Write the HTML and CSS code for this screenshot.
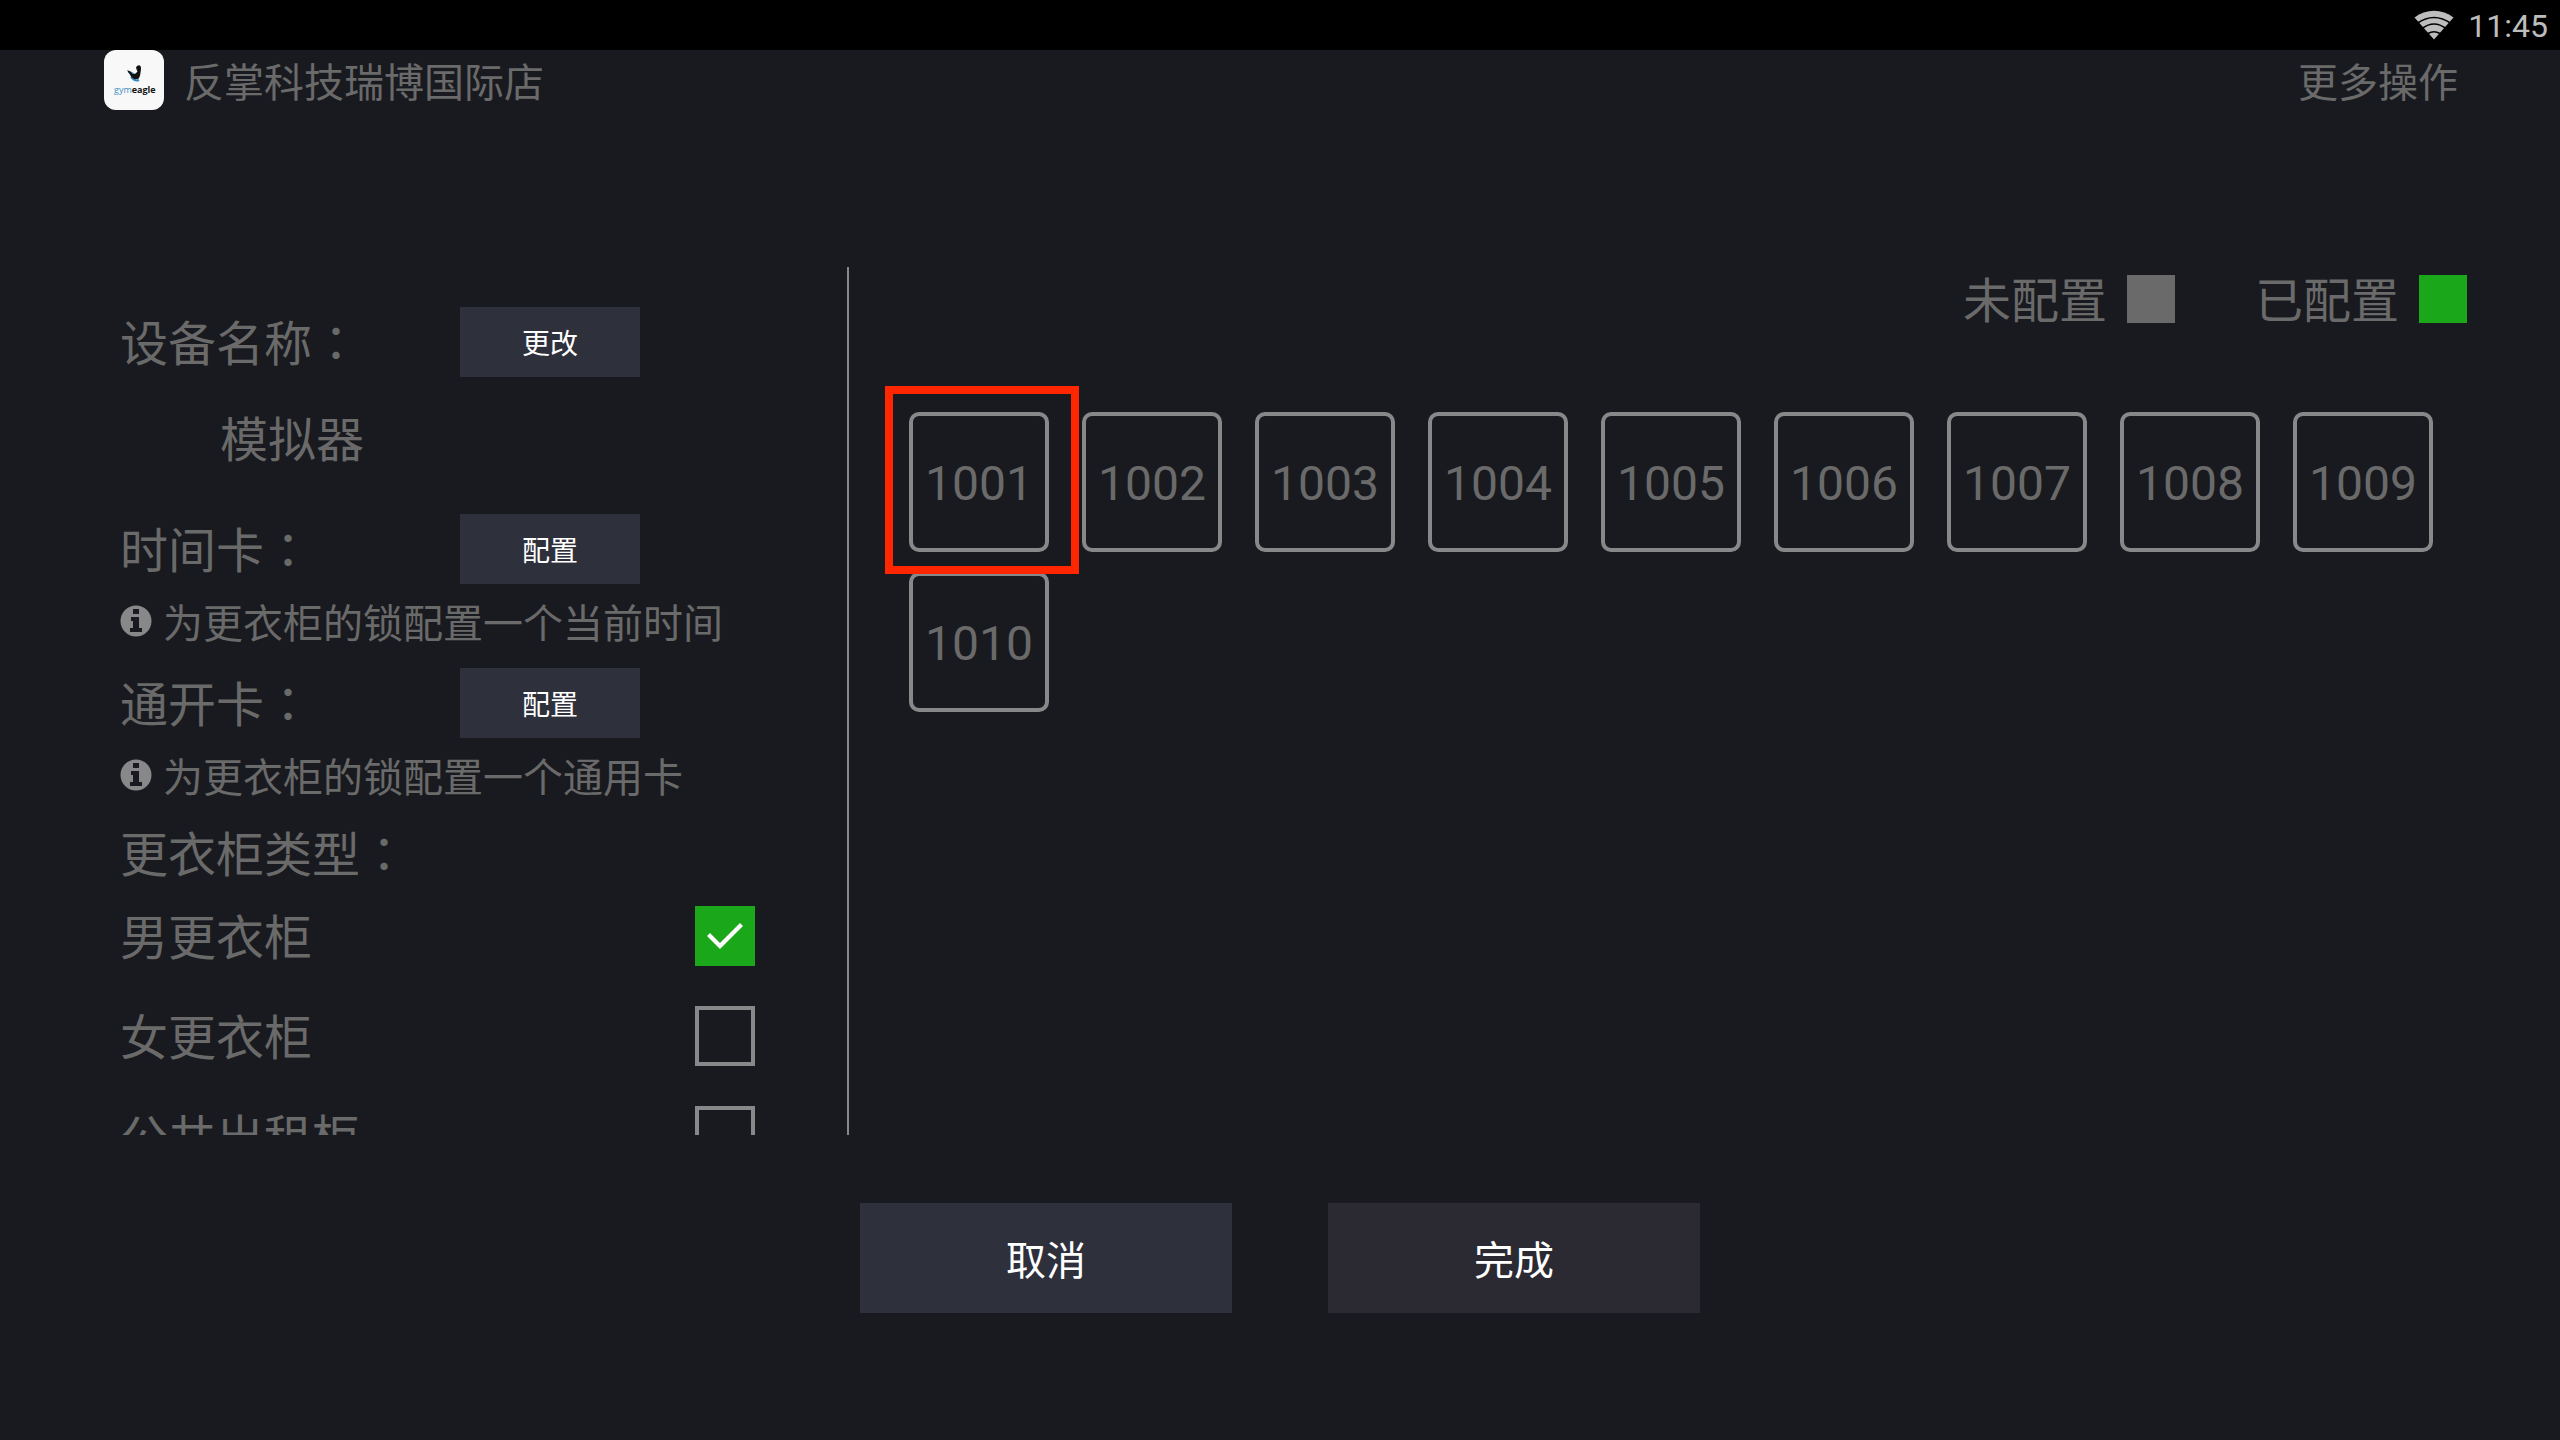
FILE: index.html
```html
<!DOCTYPE html>
<html lang="zh-CN">
<head>
<meta charset="utf-8">
<title>更衣柜配置</title>
<link rel="stylesheet" href="styles.css">
</head>
<body>
<div class="status-bar">
  <svg class="wifi" viewBox="0 0 40 30" aria-hidden="true">
    <path d="M20 29.500 0.500 7.500C12 -1.500 28 -1.500 39.500 7.500Z" fill="#bdbdbd"/>
    <g fill="none" stroke="#000" stroke-width="1.700">
      <path d="M3 13.500Q20 1.500 37 13.500"/>
      <path d="M8 18.500Q20 9.500 32 18.500"/>
      <path d="M14 23.500Q20 20 26 23.500"/>
    </g>
  </svg>
  <time class="clock">11:45</time>
</div>

<header class="top-bar">
  <svg class="logo" viewBox="0 0 60 60" role="img" aria-label="gymeagle">
    <rect width="60" height="60" rx="12" fill="#f8f8f8"/>
    <path d="M24 22q4 0 7 4" fill="none" stroke="#3a8fc4" stroke-width="2"/>
    <path d="M27 27q4 5 8 3" fill="none" stroke="#2c8cc8" stroke-width="2"/>
    <path d="M23 20.500q3-.500 5.500 3.500 3 .500 5-2.500-1-2-1.500-4 1-2.500 3.500-2.300 2 1 1.500 4-.500 6-2 9-2.500 2-5.500.500-3-2-3.500-4-1.500-3-3-4.200Z" fill="#111"/>
    <text class="logo-text" x="10" y="43"><tspan fill="#3a8fc4">gym</tspan><tspan fill="#111" font-weight="700">eagle</tspan></text>
  </svg>
  <h1 class="store-name">反掌科技瑞博国际店</h1>
  <button class="more" type="button">更多操作</button>
</header>

<main class="content">
  <section class="settings">
    <div class="row">
      <span class="label">设备名称<span class="colon" lang="zh-TW">：</span></span>
      <button class="small-button" type="button">更改</button>
    </div>
    <p class="device-name">模拟器</p>
    <div class="row">
      <span class="label">时间卡<span class="colon" lang="zh-TW">：</span></span>
      <button class="small-button" type="button">配置</button>
    </div>
    <p class="hint">
      <svg class="info" viewBox="0 0 32 32" aria-hidden="true"><circle cx="16" cy="16" r="15.500" fill="#88888a"/><path d="M13 4h6v5h-6ZM11 12h8v11h3v4H10v-4h3v-7h-2Z" fill="#191a1f"/></svg>
      为更衣柜的锁配置一个当前时间
    </p>
    <div class="row">
      <span class="label">通开卡<span class="colon" lang="zh-TW">：</span></span>
      <button class="small-button" type="button">配置</button>
    </div>
    <p class="hint">
      <svg class="info" viewBox="0 0 32 32" aria-hidden="true"><circle cx="16" cy="16" r="15.500" fill="#88888a"/><path d="M13 4h6v5h-6ZM11 12h8v11h3v4H10v-4h3v-7h-2Z" fill="#191a1f"/></svg>
      为更衣柜的锁配置一个通用卡
    </p>
    <h2 class="group-title">更衣柜类型<span class="colon" lang="zh-TW">：</span></h2>
    <div class="option">
      <label class="option-label" for="men">男更衣柜</label>
      <input class="check" id="men" type="checkbox" checked>
    </div>
    <div class="option">
      <label class="option-label" for="women">女更衣柜</label>
      <input class="check" id="women" type="checkbox">
    </div>
    <div class="option">
      <label class="option-label" for="rental">公共出租柜</label>
      <input class="check" id="rental" type="checkbox">
    </div>
  </section>

  <section class="lockers">
    <div class="legend">
      <span class="legend-item"><span class="legend-label">未配置</span><i class="swatch"></i></span>
      <span class="legend-item"><span class="legend-label">已配置</span><i class="swatch configured"></i></span>
    </div>
    <div class="locker-grid">
      <button class="locker selected" type="button">1001</button>
      <button class="locker" type="button">1002</button>
      <button class="locker" type="button">1003</button>
      <button class="locker" type="button">1004</button>
      <button class="locker" type="button">1005</button>
      <button class="locker" type="button">1006</button>
      <button class="locker" type="button">1007</button>
      <button class="locker" type="button">1008</button>
      <button class="locker" type="button">1009</button>
      <button class="locker" type="button">1010</button>
    </div>
  </section>
</main>

<footer class="actions">
  <button class="action cancel" type="button">取消</button>
  <button class="action done" type="button">完成</button>
</footer>
</body>
</html>
```
FILE: styles.css
```css
* {
  box-sizing: border-box;
}

body {
  margin: 0;
  height: 100vh;
  display: flex;
  flex-direction: column;
  background: #191a1f;
  color: #6a6a6a;
  font-family: Roboto, "Noto Sans CJK SC", sans-serif;
  font-size: 48px;
}

h1,
h2,
p {
  margin: 0;
  font-weight: 400;
}

button {
  padding: 0;
  border: 0;
  background: none;
  color: inherit;
  font: inherit;
}

.status-bar {
  display: flex;
  justify-content: flex-end;
  align-items: center;
  gap: 14px;
  height: 50px;
  padding-right: 12px;
  background: #000;
  color: #bdbdbd;
  font-size: 32px;
}

.wifi {
  width: 40px;
  height: 30px;
}

.clock {
  padding-top: 2px;
}

.top-bar {
  display: flex;
  align-items: center;
  height: 60px;
  margin-bottom: 157px;
  padding: 0 102px 0 104px;
  font-size: 40px;
}

.logo {
  width: 60px;
  height: 60px;
  margin-right: 20px;
}

.logo-text {
  font-family: "Open Sans", sans-serif;
  font-size: 9px;
}

.store-name {
  flex: 1;
  font-size: 40px;
}

.content {
  flex: 1;
  min-height: 0;
  display: flex;
}

.settings {
  flex: 0 0 849px;
  padding: 40px 92px 0 120px;
  border-right: 2px solid #88888a;
  overflow-y: auto;
  scrollbar-width: none;
}

.row {
  display: flex;
  align-items: center;
  height: 70px;
}

.label,
.option-label,
.legend-label {
  padding-top: 6px;
  line-height: 60px;
}

.label {
  width: 340px;
}

.colon {
  font-family: "Noto Sans CJK TC", sans-serif;
  line-height: 1;
}

.small-button {
  width: 180px;
  height: 70px;
  background: #2e303c;
  color: #fff;
  font-size: 28px;
}

.device-name {
  margin: 32px 0 41px 100px;
  line-height: 64px;
}

.hint {
  display: flex;
  align-items: center;
  gap: 11px;
  height: 56px;
  margin: 9px 0 19px;
  font-size: 40px;
}

.info {
  width: 32px;
  height: 32px;
}

.group-title {
  padding-top: 4px;
  font-size: 48px;
  line-height: 60px;
}

.option {
  display: flex;
  justify-content: space-between;
  align-items: center;
  height: 100px;
}

.check {
  appearance: none;
  width: 60px;
  height: 60px;
  margin: 0;
  border: 4px solid #88888a;
}

.check:checked {
  display: grid;
  place-items: center;
  border: 0;
  background: #1aa81a;
}

.check:checked::before {
  content: "";
  width: 38px;
  height: 28px;
  background: #fff;
  clip-path: polygon(1px 14px, 4px 11px, 14px 21px, 34px 1px, 37px 4px, 14px 27px);
}

.lockers {
  flex: 1;
  padding: 0 93px 0 60px;
}

.legend {
  display: flex;
  justify-content: flex-end;
  gap: 80px;
  height: 64px;
  margin-bottom: 81px;
}

.legend-item {
  display: flex;
  align-items: center;
  gap: 20px;
}

.swatch {
  width: 48px;
  height: 48px;
  background: #6a6a6a;
}

.configured {
  background: #1aa81a;
}

.locker-grid {
  display: grid;
  grid-template-columns: repeat(auto-fill, 140px);
  gap: 20px 33px;
}

.locker {
  position: relative;
  height: 140px;
  padding-top: 2px;
  border: 4px solid #88888a;
  border-radius: 10px;
}

.selected::after {
  content: "";
  position: absolute;
  z-index: 1;
  inset: -30px -34px -26px -28px;
  border: 8px solid #ff2600;
}

.actions {
  display: flex;
  justify-content: center;
  gap: 96px;
  padding: 68px 0 127px;
}

.action {
  width: 372px;
  height: 110px;
  color: #fff;
  font-size: 40px;
}

.cancel {
  background: #2e303c;
}

.done {
  background: #2b2a33;
}
```
